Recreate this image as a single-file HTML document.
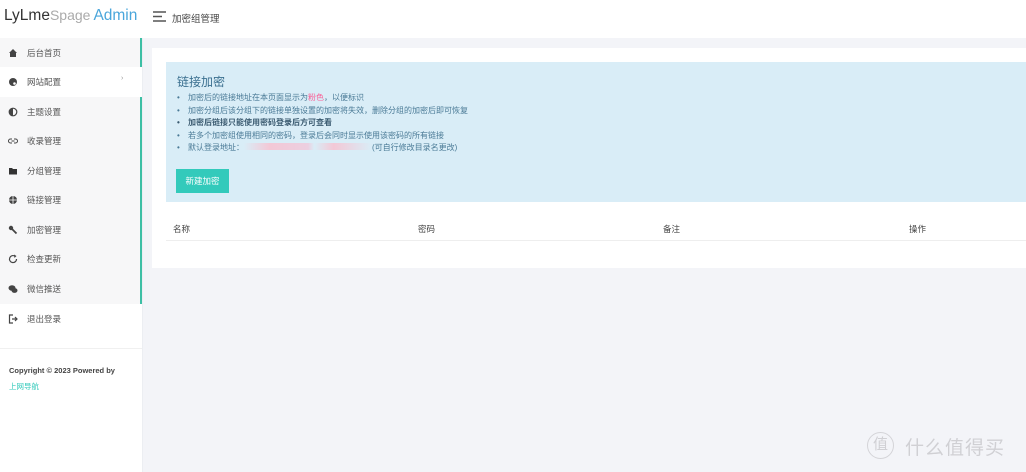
<!DOCTYPE html>
<html><head><meta charset="utf-8"><style>
*{margin:0;padding:0;box-sizing:border-box}
body{width:1026px;height:472px;overflow:hidden;background:#f3f4f8;font-family:"Liberation Sans","Noto Sans CJK SC",sans-serif;font-size:9px;color:#555;position:relative}
.top{position:absolute;left:0;top:0;width:1026px;height:38px;background:#fff}
.logo{position:absolute;left:4px;top:7px;font-size:15.5px;white-space:nowrap}
.side{position:absolute;left:0;top:38px;width:143px;height:434px;background:#fff;border-right:1px solid #eceef2}
.it{position:absolute;left:0;width:142px;height:29.5px;background:#f7f7f8;border-right:2px solid #3dbfa5}
.it span{position:absolute;left:27px;top:9px;font-size:8.5px;color:#555}
.it svg{position:absolute;left:8px;top:10px;width:10px;height:10px}
.card{position:absolute;left:152px;top:48px;width:874px;height:220px;background:#fff}
.alert{position:absolute;left:166px;top:62px;width:860px;height:140px;background:#d9edf7}
.alert h3{position:absolute;left:11px;top:11px;font-size:12px;font-weight:normal;color:#3a6f8f}
.alert ul{position:absolute;left:11px;top:30px;list-style:none;font-size:8px;color:#4a7a96;line-height:12.6px}
.alert li:before{content:"•";display:inline-block;width:11px}
.btn{position:absolute;left:10px;top:107px;width:53px;height:24px;background:#33cabb;color:#fff;font-size:8.5px;text-align:center;line-height:24px}
.th{position:absolute;top:223px;font-size:8.5px;color:#444}
</style></head><body>
<div class="top">
<div class="logo"><span style="color:#333">LyLme</span><span style="color:#aaa;font-size:14px">Spage</span><span style="color:#4aa6db;margin-left:3px">Admin</span></div>
<svg style="position:absolute;left:153px;top:11px" width="13" height="11"><path d="M0 1H13M0 5.5H9M0 10H13" stroke="#555" stroke-width="1.4"/></svg>
<div style="position:absolute;left:172px;top:11px;font-size:9.5px;color:#444">加密组管理</div>
</div>
<div class="side">
<div class="it" style="top:0"><svg viewBox="0 0 10 10"><path d="M5 1L1 5H2V9H8V5H9Z" fill="#444"/></svg><span>后台首页</span></div>
<div class="it" style="top:29px;background:#fff;border-right:none"><svg viewBox="0 0 10 10"><circle cx="5" cy="5" r="4" fill="#444"/><circle cx="6.5" cy="6.5" r="1.3" fill="#fff"/></svg><span>网站配置</span><b style="position:absolute;left:121px;top:8px;font-size:7px;font-weight:normal;color:#999">›</b></div>
<div class="it" style="top:59px"><svg viewBox="0 0 10 10"><circle cx="5" cy="5" r="3.8" fill="none" stroke="#444" stroke-width="1.2"/><path d="M5 1.2A3.8 3.8 0 0 0 5 8.8Z" fill="#444"/></svg><span>主题设置</span></div>
<div class="it" style="top:88px"><svg viewBox="0 0 10 10"><path d="M4 3H2.5A2 2 0 0 0 2.5 7H4M6 3H7.5A2 2 0 0 1 7.5 7H6M3.5 5H6.5" fill="none" stroke="#444" stroke-width="1"/></svg><span>收录管理</span></div>
<div class="it" style="top:118px"><svg viewBox="0 0 10 10"><path d="M1 2H4L5 3H9V8.5H1Z" fill="#333"/></svg><span>分组管理</span></div>
<div class="it" style="top:147px"><svg viewBox="0 0 10 10"><circle cx="5" cy="5" r="4" fill="#444"/><path d="M1 5H9M5 1V9" stroke="#fff" stroke-width=".8"/></svg><span>链接管理</span></div>
<div class="it" style="top:177px"><svg viewBox="0 0 10 10"><circle cx="3" cy="3" r="2.2" fill="#444"/><path d="M4 4L8.5 8.5" stroke="#444" stroke-width="1.8"/></svg><span>加密管理</span></div>
<div class="it" style="top:206px"><svg viewBox="0 0 10 10"><path d="M8.5 5A3.5 3.5 0 1 1 7 2.2" fill="none" stroke="#444" stroke-width="1.2"/><path d="M6 0.5L8.5 2 6.5 4Z" fill="#444"/></svg><span>检查更新</span></div>
<div class="it" style="top:236px"><svg viewBox="0 0 10 10"><ellipse cx="4" cy="4" rx="3.5" ry="2.8" fill="#444"/><ellipse cx="6.5" cy="6.5" rx="3" ry="2.4" fill="#444"/></svg><span>微信推送</span></div>
<div class="it" style="top:266px;background:#fff;border-right:none"><svg viewBox="0 0 10 10"><path d="M5 1H1.5V9H5" fill="none" stroke="#444" stroke-width="1.2"/><path d="M4 5H9M7 3L9 5 7 7" fill="none" stroke="#444" stroke-width="1.2"/></svg><span>退出登录</span></div>
<div style="position:absolute;left:0;top:310px;width:142px;border-top:1px solid #f0f0f0"></div>
<div style="position:absolute;left:9px;top:328px;font-size:7.5px;color:#444;font-weight:bold">Copyright © 2023 Powered by</div>
<div style="position:absolute;left:9px;top:343px;font-size:7.5px;color:#33cabb">上网导航</div>
</div>
<div class="card">
<div style="position:absolute;left:14px;top:192px;width:860px;border-top:1px solid #eee"></div>
</div>
<div class="alert">
<h3>链接加密</h3>
<ul>
<li>加密后的链接地址在本页面显示为<span style="color:#f96197">粉色</span>，以便标识</li>
<li>加密分组后该分组下的链接单独设置的加密将失效，删除分组的加密后即可恢复</li>
<li style="font-weight:bold;color:#3a5a70">加密后链接只能使用密码登录后方可查看</li>
<li>若多个加密组使用相同的密码，登录后会同时显示使用该密码的所有链接</li>
<li>默认登录地址：<span style="display:inline-block;width:128px;height:7px;background:linear-gradient(90deg,#d9edf7,#f3c8d6 20%,#eccfe0 50%,#d9edf7 55%,#f3c8d6 70%,#d9edf7)"></span>(可自行修改目录名更改)</li>
</ul>
<div class="btn">新建加密</div>
</div>
<div class="th" style="left:173px">名称</div>
<div class="th" style="left:418px">密码</div>
<div class="th" style="left:663px">备注</div>
<div class="th" style="left:909px">操作</div>
<div style="position:absolute;left:867px;top:432px;width:27px;height:27px;border:1.5px solid #d4d4d8;border-radius:50%;text-align:center;font-size:15px;line-height:24px;color:#d0d0d4">值</div>
<div style="position:absolute;left:905px;top:433px;font-size:19px;color:#d0d0d4;letter-spacing:1px">什么值得买</div>
</body></html>
